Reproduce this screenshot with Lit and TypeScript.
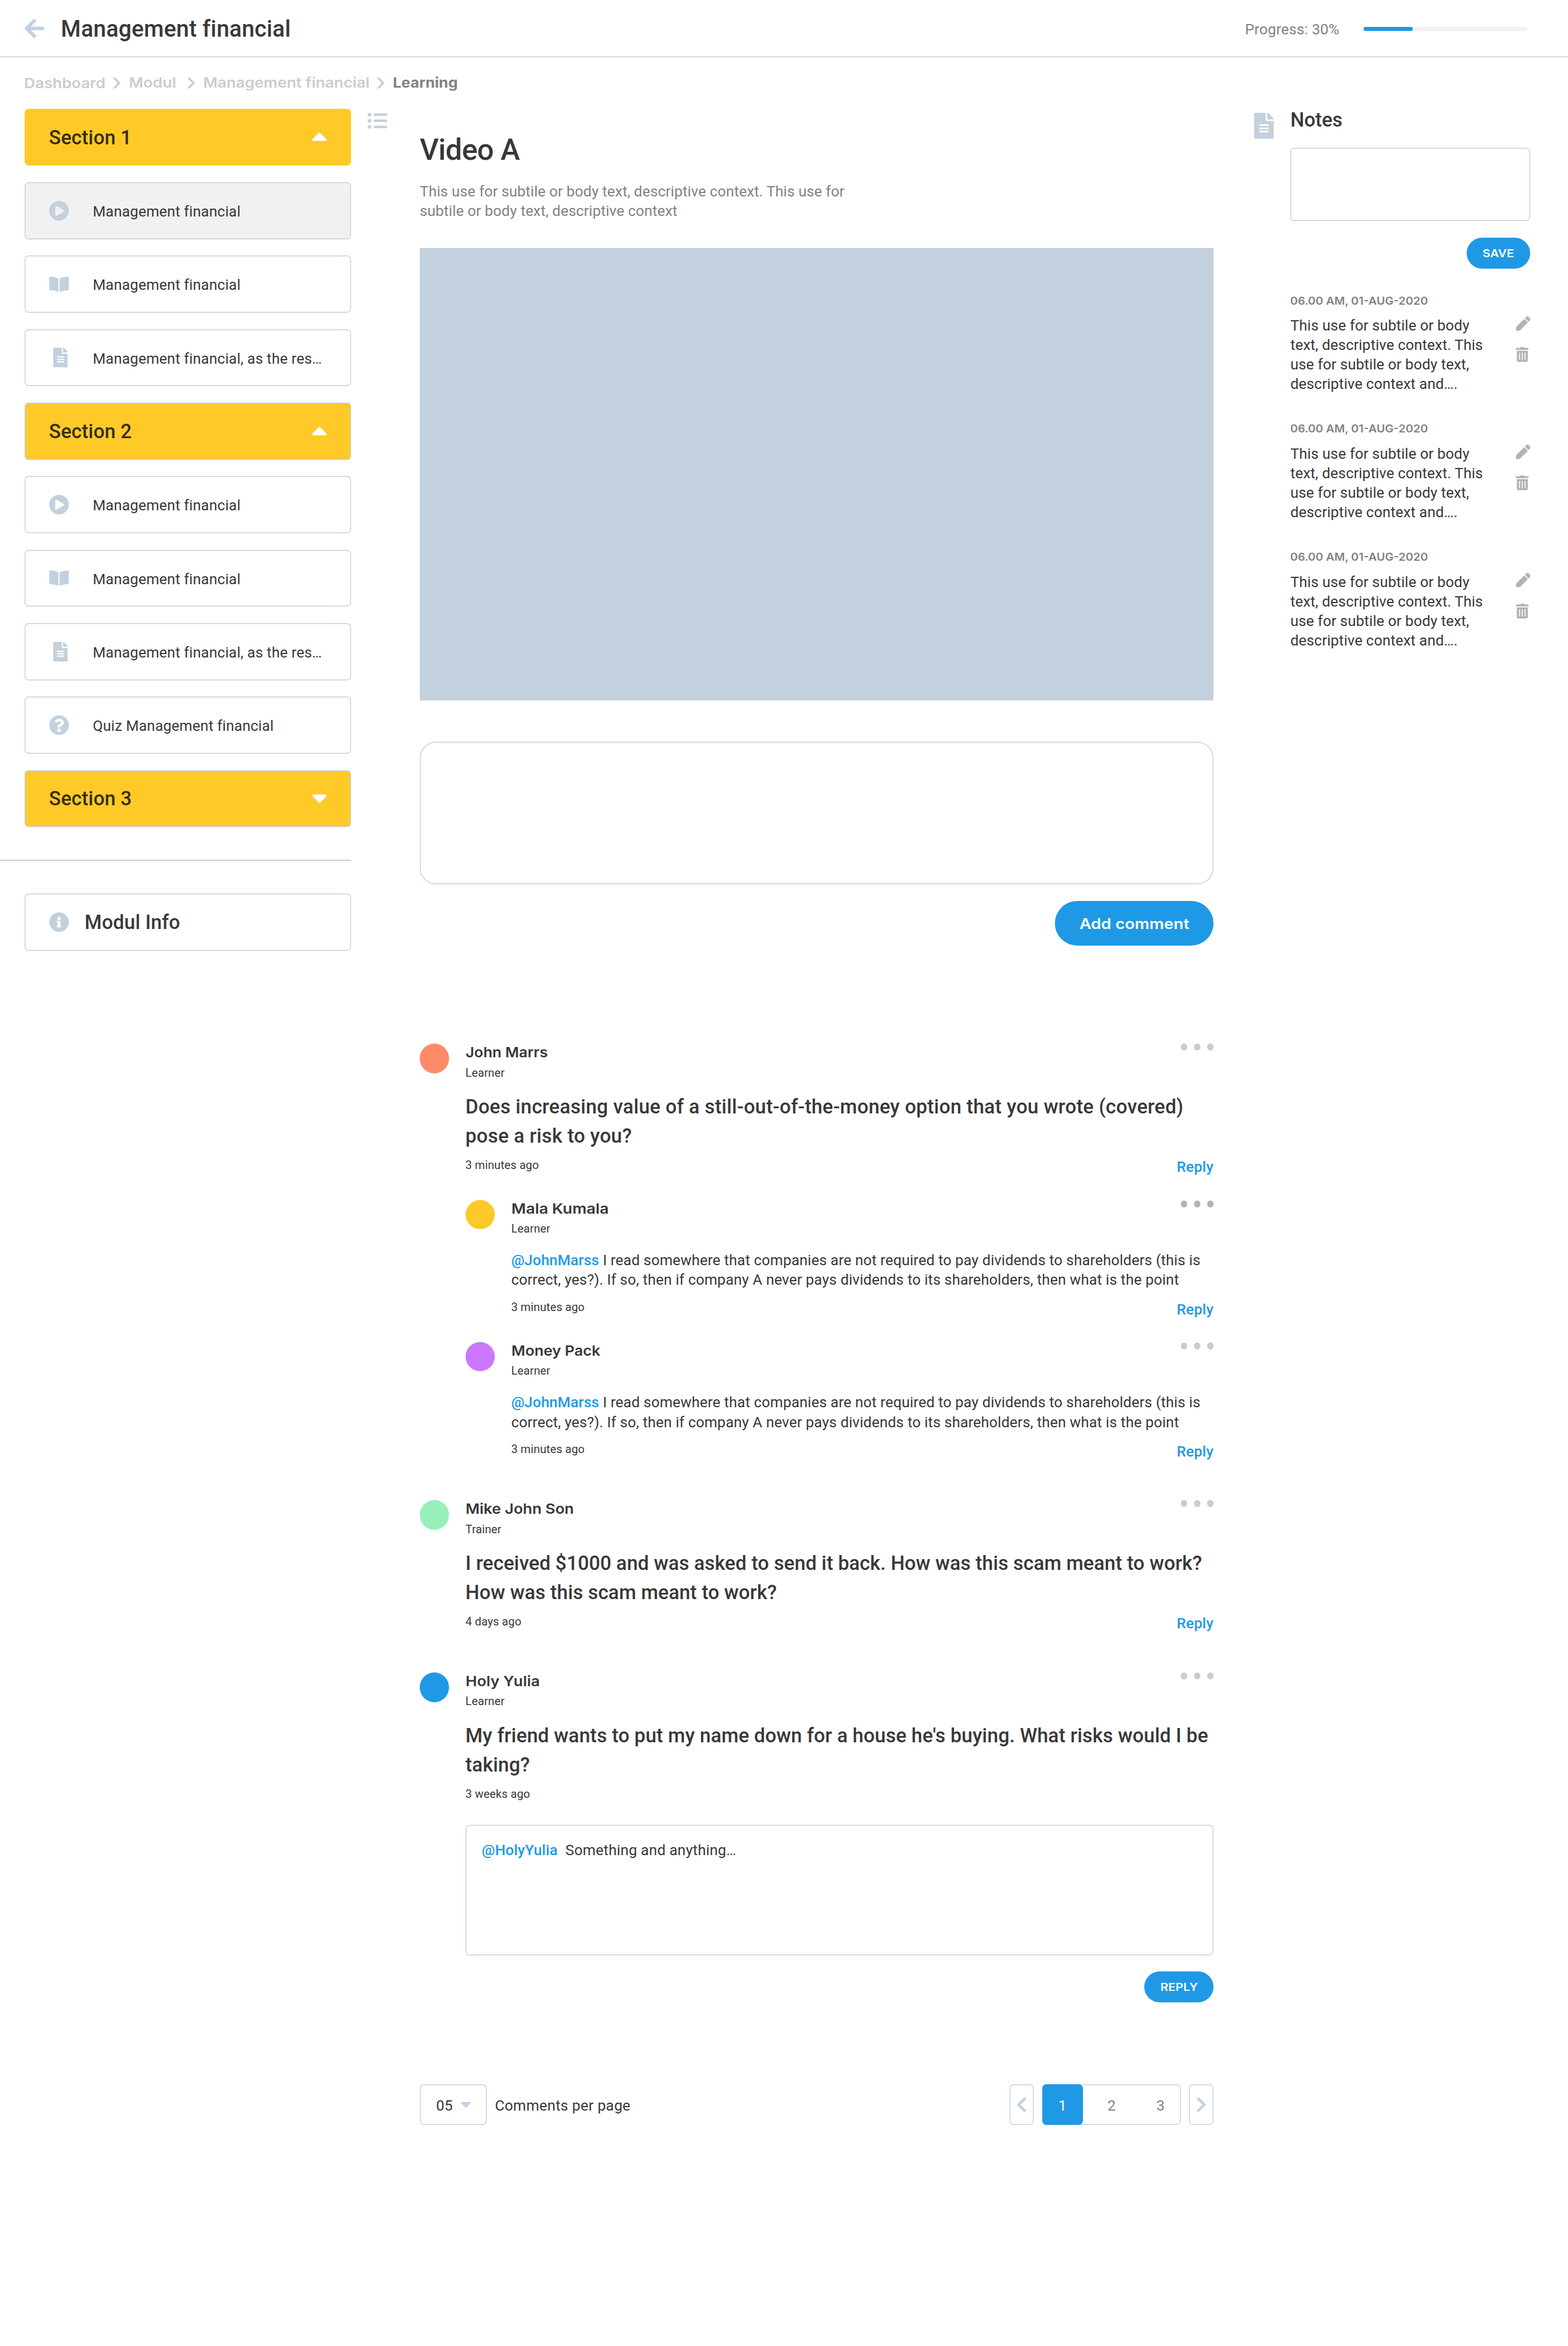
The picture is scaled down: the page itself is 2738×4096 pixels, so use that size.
import { LitElement, html, css, svg, nothing } from "lit";
import { customElement, property } from "lit/decorators.js";

const INK = css`#383838`;
const LINE = css`#c3d0de`;
const BLUE = css`#1f99e6`;

interface Glyph {
  box: string;
  w: number;
  h: number;
  d: string;
}

const GLYPHS: Record<string, Glyph> = {
  back: {
    box: "0 37.6 448 436.8", w: 24, h: 23.4,
    d: "M257.5 445.1l-22.2 22.2c-9.4 9.4-24.6 9.4-33.9 0L7 273c-9.4-9.4-9.4-24.6 0-33.9L201.4 44.7c9.4-9.4 24.6-9.4 33.9 0l22.2 22.2c9.5 9.5 9.3 25-.4 34.3L136.6 216H424c13.3 0 24 10.7 24 24v32c0 13.3-10.7 24-24 24H136.6l120.5 114.8c9.8 9.3 10 24.8.4 34.3z",
  },
  right: {
    box: "27.5 41 265 430", w: 8.7, h: 14,
    d: "M285.476 272.971L91.132 467.314c-9.373 9.373-24.569 9.373-33.941 0l-22.667-22.667c-9.357-9.357-9.375-24.522-.04-33.901L188.505 256 34.484 101.255c-9.335-9.379-9.317-24.544.04-33.901l22.667-22.667c9.373-9.373 24.569-9.373 33.941 0L285.475 239.03c9.373 9.372 9.373 24.568.001 33.941z",
  },
  left: {
    box: "27.5 41 265 430", w: 11, h: 18,
    d: "M34.52 239.03L228.87 44.69c9.37-9.37 24.57-9.37 33.94 0l22.67 22.67c9.36 9.36 9.37 24.52.04 33.9L131.49 256l154.02 154.75c9.34 9.38 9.32 24.54-.04 33.9l-22.67 22.67c-9.37 9.37-24.57 9.37-33.94 0L34.52 272.97c-9.37-9.37-9.37-24.57 0-33.94z",
  },
  up: {
    box: "11.3 191.4 297.4 160.6", w: 18, h: 10,
    d: "M288.662 352H31.338c-17.818 0-26.741-21.543-14.142-34.142l128.662-128.662c7.81-7.81 20.474-7.81 28.284 0l128.662 128.662c12.6 12.599 3.676 34.142-14.142 34.142z",
  },
  down: {
    box: "11.3 192 297.4 168.6", w: 18, h: 10.4,
    d: "M31.3 192h257.3c17.8 0 26.7 21.5 14.1 34.1L174.1 354.7c-7.8 7.8-20.5 7.8-28.3 0L17.2 226.1C4.6 213.5 13.5 192 31.3 192z",
  },
  list: {
    box: "0 48 512 416", w: 24, h: 19.5,
    d: "M48 48a48 48 0 1 0 48 48 48 48 0 0 0-48-48zm0 160a48 48 0 1 0 48 48 48 48 0 0 0-48-48zm0 160a48 48 0 1 0 48 48 48 48 0 0 0-48-48zm448 16H176a16 16 0 0 0-16 16v32a16 16 0 0 0 16 16h320a16 16 0 0 0 16-16v-32a16 16 0 0 0-16-16zm0-320H176a16 16 0 0 0-16 16v32a16 16 0 0 0 16 16h320a16 16 0 0 0 16-16V80a16 16 0 0 0-16-16zm0 160H176a16 16 0 0 0-16 16v32a16 16 0 0 0 16 16h320a16 16 0 0 0 16-16v-32a16 16 0 0 0-16-16z",
  },
  play: {
    box: "8 8 496 496", w: 24, h: 24,
    d: "M256 8C119 8 8 119 8 256s111 248 248 248 248-111 248-248S393 8 256 8zm115.7 272l-176 101c-15.8 8.8-35.7-2.5-35.7-21V152c0-18.4 19.8-29.8 35.7-21l176 107c16.4 9.2 16.4 32.9 0 42z",
  },
  book: {
    box: "0 32 576 448", w: 24, h: 18.67,
    d: "M542.22 32.05c-54.8 3.11-163.72 14.43-230.96 55.59-4.64 2.84-7.27 7.89-7.27 13.17v363.87c0 11.55 12.63 18.85 23.28 13.49 69.18-34.82 169.23-44.32 218.7-46.92 16.89-.89 30.02-14.43 30.02-30.66V62.75c.01-17.71-15.35-31.74-33.77-30.7zM264.73 87.64C197.5 46.48 88.58 35.17 33.78 32.05 15.36 31.01 0 45.04 0 62.75V400.6c0 16.24 13.13 29.78 30.02 30.66 49.49 2.6 149.59 12.11 218.77 46.95 10.62 5.35 23.21-1.94 23.21-13.46V100.63c0-5.29-2.62-10.14-7.27-12.99z",
  },
  doc: {
    box: "0 0 384 512", w: 18, h: 24,
    d: "M224 136V0H24C10.7 0 0 10.7 0 24v464c0 13.3 10.7 24 24 24h336c13.3 0 24-10.7 24-24V160H248c-13.2 0-24-10.8-24-24zm64 236c0 6.6-5.4 12-12 12H108c-6.6 0-12-5.4-12-12v-8c0-6.6 5.4-12 12-12h168c6.6 0 12 5.4 12 12v8zm0-64c0 6.6-5.4 12-12 12H108c-6.6 0-12-5.4-12-12v-8c0-6.6 5.4-12 12-12h168c6.6 0 12 5.4 12 12v8zm0-72v8c0 6.6-5.4 12-12 12H108c-6.6 0-12-5.4-12-12v-8c0-6.6 5.4-12 12-12h168c6.6 0 12 5.4 12 12zm96-114.1v6.1H256V0h6.1c6.4 0 12.5 2.5 17 7l97.9 98c4.5 4.5 7 10.6 7 16.9z",
  },
  quiz: {
    box: "8 8 496 496", w: 24, h: 24,
    d: "M504 256c0 136.997-111.043 248-248 248S8 392.997 8 256C8 119.083 119.043 8 256 8s248 111.083 248 248zM262.655 90c-54.497 0-89.255 22.957-116.549 63.758-3.536 5.286-2.353 12.415 2.715 16.258l34.699 26.31c5.205 3.947 12.621 3.008 16.665-2.122 17.864-22.658 30.113-35.797 57.303-35.797 20.429 0 45.698 13.148 45.698 32.958 0 14.976-12.363 22.667-32.534 33.976C247.128 238.528 216 254.941 216 296v4c0 6.627 5.373 12 12 12h56c6.627 0 12-5.373 12-12v-1.333c0-28.462 83.186-29.647 83.186-106.667 0-58.002-60.165-102-116.531-102zM256 338c-25.365 0-46 20.635-46 46 0 25.364 20.635 46 46 46s46-20.636 46-46c0-25.365-20.635-46-46-46z",
  },
  info: {
    box: "8 8 496 496", w: 24, h: 24,
    d: "M256 8C119.043 8 8 119.083 8 256c0 136.997 111.043 248 248 248s248-111.003 248-248C504 119.083 392.957 8 256 8zm0 110c23.196 0 42 18.804 42 42s-18.804 42-42 42-42-18.804-42-42 18.804-42 42-42zm56 254c0 6.627-5.373 12-12 12h-88c-6.627 0-12-5.373-12-12v-24c0-6.627 5.373-12 12-12h12v-64h-12c-6.627 0-12-5.373-12-12v-24c0-6.627 5.373-12 12-12h64c6.627 0 12 5.373 12 12v100h12c6.627 0 12 5.373 12 12v24z",
  },
  pen: {
    box: "0 0 512 512", w: 18, h: 18,
    d: "M290.74 93.24l128.02 128.02-277.99 277.99-114.14 12.6C11.35 513.54-1.56 500.62.14 485.34l12.7-114.22 277.9-277.88zm207.2-19.06l-60.11-60.11c-18.75-18.75-49.16-18.75-67.91 0l-56.55 56.55 128.02 128.02 56.55-56.55c18.75-18.76 18.75-49.16 0-67.91z",
  },
  trash: {
    box: "0 0 448 512", w: 15.75, h: 18,
    d: "M32 464a48 48 0 0 0 48 48h288a48 48 0 0 0 48-48V128H32zm272-256a16 16 0 0 1 32 0v224a16 16 0 0 1-32 0zm-96 0a16 16 0 0 1 32 0v224a16 16 0 0 1-32 0zm-96 0a16 16 0 0 1 32 0v224a16 16 0 0 1-32 0zM432 32H312l-9.4-18.7A24 24 0 0 0 281.1 0H166.8a23.72 23.72 0 0 0-21.4 13.3L136 32H16A16 16 0 0 0 0 48v32a16 16 0 0 0 16 16h416a16 16 0 0 0 16-16V48a16 16 0 0 0-16-16z",
  },
};

const icon = (name: string, w?: number) => {
  const g = GLYPHS[name];
  const width = w ?? g.w;
  const height = (width / g.w) * g.h;
  return html`<svg class="icon" width=${width} height=${height} viewBox=${g.box} aria-hidden="true">
    ${svg`<path d=${g.d} fill="currentColor"></path>`}
  </svg>`;
};

/** Display text set in an extended width. */
const wide = (text: string, stretch: number) =>
  html`<span class="wide" style="transform:scaleX(${stretch})">${text}</span>`;

const base = css`
  :host { display: block; }
  * { box-sizing: border-box; }
  .icon { display: block; flex: none; }
  .wide { display: inline-block; transform-origin: left center; white-space: nowrap; }
  .btn {
    display: flex; align-items: center; justify-content: center;
    background: ${BLUE}; color: #fff;
    font-family: Inter, "Noto Sans", sans-serif; font-weight: 600; white-space: nowrap;
  }
  .btn .wide { transform-origin: center; }
  .btn.small { height: 38px; border-radius: 19px; font-size: 13.5px; }
  .outline { background: #fff; box-shadow: inset 0 0 0 1px ${LINE}; border-radius: 5px; }
  .mention { color: ${BLUE}; font-weight: 500; }
`;

interface Entry { kind: "section" | "item"; label: string; icon: string; active?: boolean; plain?: boolean; }

const ENTRIES: Entry[] = [
  { kind: "section", label: "Section 1", icon: "up", plain: true },
  { kind: "item", label: "Management financial", icon: "play", active: true },
  { kind: "item", label: "Management financial", icon: "book" },
  { kind: "item", label: "Management financial, as the res…", icon: "doc" },
  { kind: "section", label: "Section 2", icon: "up" },
  { kind: "item", label: "Management financial", icon: "play" },
  { kind: "item", label: "Management financial", icon: "book" },
  { kind: "item", label: "Management financial, as the res…", icon: "doc" },
  { kind: "item", label: "Quiz Management financial", icon: "quiz" },
  { kind: "section", label: "Section 3", icon: "down" },
];

@customElement("course-sidebar")
class CourseSidebar extends LitElement {
  static styles = [base, css`
    .entries { display: flex; flex-direction: column; gap: 20px; padding-left: 30px; }
    .row { display: flex; align-items: center; height: 70px; padding: 0 30px; }
    .section { justify-content: space-between; background: #ffca28; border-radius: 5px; font-weight: 500; font-size: 24px; letter-spacing: .09px; color: #382d0f; box-shadow: inset 0 0 0 1px ${LINE}; }
    .section.plain { box-shadow: none; }
    .section .icon { color: #fff; }
    .item { padding-right: 0; font-size: 18px; letter-spacing: .115px; }
    .active { background: #f1f1f1; }
    .slot { width: 24px; margin-right: 29.6px; color: ${LINE}; display: flex; }
    .slot.doc { padding-left: 5px; }
    .label { padding-top: 1.6px; white-space: nowrap; }
    .rule { height: 1px; margin: 40px 0; background: ${LINE}; }
    .module { margin-left: 30px; font-size: 24px; font-weight: 500; letter-spacing: .12px; }
    .module .slot { margin-right: 19.7px; }
  `];
  render() {
    return html`
      <div class="entries">
        ${ENTRIES.map((e) => e.kind === "section"
          ? html`<div class="row section ${e.plain ? "plain" : ""}"><span>${e.label}</span>${icon(e.icon)}</div>`
          : html`<div class="row item outline ${e.active ? "active" : ""}">
              <span class="slot ${e.icon}">${icon(e.icon)}</span><span class="label">${e.label}</span>
            </div>`)}
      </div>
      <div class="rule"></div>
      <div class="row module outline"><span class="slot">${icon("info")}</span><span>Modul Info</span></div>
    `;
  }
}

@customElement("comment-item")
class CommentItem extends LitElement {
  @property() name = "";
  @property({ type: Number }) stretch = 1;
  @property({ type: Number }) tracking = 0.08;
  @property() standing = "";
  @property() color = "";
  @property() mention = "";
  @property() text = "";
  @property() time = "";
  @property({ type: Boolean }) nested = false;
  @property({ type: Boolean }) dark = false;
  @property({ type: Boolean }) replying = false;
  static styles = [base, css`
    .comment { display: grid; grid-template-columns: 36px 1fr; column-gap: 20px; }
    .avatar { width: 36px; height: 36px; border-radius: 50%; }
    .top { display: flex; justify-content: space-between; height: 45.2px; padding-top: .7px; }
    .name { font: 600 17.3px/20px Inter, "Noto Sans", sans-serif; height: 20px; white-space: nowrap; }
    .role { font-size: 14px; line-height: 20px; margin-top: 4.7px; letter-spacing: .1px; }
    .dots { display: flex; gap: 8px; color: #ccc; margin-top: -.7px; }
    .dots i { width: 8px; height: 8px; border-radius: 50%; background: currentColor; }
    .text { font-size: 24px; line-height: 36px; font-weight: 500; margin-top: 14.2px; }
    .foot { display: flex; justify-content: space-between; margin-top: 7.4px; height: 52.2px; }
    .time { font-size: 14px; line-height: 20px; letter-spacing: .1px; }
    .reply { font-size: 18px; line-height: 20px; font-weight: 500; color: ${BLUE}; margin-top: 2.2px; letter-spacing: .12px; }
    .nested .dots { margin-top: .3px; }
    .nested .dots.dark { color: #b3b3b3; }
    .nested .text { font-size: 18px; line-height: 24px; font-weight: 400; margin-top: 16.9px; }
    .nested .foot { margin-top: 11.4px; height: 52.5px; }
    .nested .reply { margin-top: 2.6px; }
    .replying .foot { height: 47.2px; }
  `];
  render() {
    return html`<div class="comment ${this.nested ? "nested" : ""} ${this.replying ? "replying" : ""}">
      <span class="avatar" style="background:${this.color}"></span>
      <div>
        <div class="top">
          <div><div class="name">${wide(this.name, this.stretch)}</div><div class="role">${this.standing}</div></div>
          <div class="dots ${this.dark ? "dark" : ""}"><i></i><i></i><i></i></div>
        </div>
        <div class="text" style="letter-spacing:${this.tracking}px">${this.mention ? html`<span class="mention">${this.mention}</span> ` : nothing}${this.text}</div>
        <div class="foot"><span class="time">${this.time}</span>${this.replying ? nothing : html`<span class="reply">Reply</span>`}</div>
      </div>
    </div>`;
  }
}

@customElement("note-item")
class NoteItem extends LitElement {
  static styles = [base, css`
    .note { display: grid; grid-template-columns: 250px 1fr; height: 157px; align-content: start; }
    .date { font: 600 13.4px/16px Inter, "Noto Sans", sans-serif; color: #828282; height: 26.1px; white-space: nowrap; }
    .text { font-size: 18px; line-height: 24px; letter-spacing: .09px; }
    .tools { display: flex; flex-direction: column; gap: 20px; padding: 27px 0 0 26px; color: #b3b3b3; }
  `];
  render() {
    return html`<div class="note">
      <div><div class="date">${wide("06.00 AM, 01-AUG-2020", 1.045)}</div>
      <div class="text">This use for subtile or body text, descriptive context. This use for subtile or body text, descriptive context and….</div></div>
      <div class="tools">${icon("pen")}${icon("trash")}</div>
    </div>`;
  }
}

const DIVIDENDS = "I read somewhere that companies are not required to pay dividends to shareholders (this is correct, yes?). If so, then if company A never pays dividends to its shareholders, then what is the point";

@customElement("app-root")
class AppRoot extends LitElement {
  static styles = [base, css`
    .page { zoom: 1.42604; width: 1920px; height: 2872px; overflow: hidden; background: #fff; color: ${INK}; font-family: Roboto, "Noto Sans", sans-serif; }
    .header { display: flex; align-items: center; height: 70px; padding: 0 50px 0 30px; box-shadow: inset 0 -1px 0 ${LINE}; }
    .header .icon { color: ${LINE}; }
    .title { font-size: 28px; font-weight: 500; margin-left: 20.6px; flex: 1; letter-spacing: .1px; padding-top: 1px; }
    .progress { font-size: 18px; color: #828282; width: 145.5px; padding-top: 2px; letter-spacing: .13px; }
    .bar { width: 200px; height: 5px; border-radius: 2.5px; background: #f1f1f1; margin-top: 1px; }
    .fill { height: 5px; border-radius: 2.5px; background: ${BLUE}; }
    .crumbs { display: grid; grid-template-columns: 109.2px 18.8px 72.5px 19px 213px 19px auto; align-items: center; height: 24px; margin: 18px 0 21px 29.5px; font: 600 17.3px/24px Inter, "Noto Sans", sans-serif; color: #ccc; white-space: nowrap; }
    .crumbs > .icon { margin-top: 1px; }
    .low { margin-top: 2px; }
    .crumbs .here { color: #828282; font-weight: 700; }
    .body { display: grid; grid-template-columns: 430px 84px 972px 94px 294px; }
    .rail { padding: 5px 0 0 20px; color: ${LINE}; }
    .rail.right { padding-left: 50px; }
    .heading { font-size: 36px; line-height: 48px; font-weight: 500; margin-top: 27px; letter-spacing: -.4px; }
    .desc { font-size: 18px; line-height: 24px; color: #828282; width: 540px; margin-top: 14px; letter-spacing: .08px; }
    .video { height: 554px; margin-top: 34px; background: ${LINE}; }
    .composer { height: 175px; margin-top: 50px; border-radius: 20px; }
    .add { width: 194px; height: 55px; border-radius: 27.5px; font-size: 17.8px; margin: 20px 0 120px auto; }
    .replies { padding: 0 0 20px 56px; }
    .gap { height: 20px; }
    .replybox { height: 160px; margin-left: 56px; padding: 19.2px 20px; font-size: 18px; line-height: 24px; letter-spacing: .15px; }
    .replybox .mention { margin-right: 5px; letter-spacing: .07px; }
    .send { width: 85px; margin: 20px 0 0 auto; }
    .pager { display: flex; align-items: center; height: 50px; margin-top: 100px; font-size: 18px; }
    .size { width: 82px; height: 50px; display: flex; align-items: center; padding-left: 20px; gap: 10px; margin-right: 10px; }
    .size span, .caption { padding-top: 1.6px; }
    .caption { letter-spacing: .22px; }
    .size .icon, .step { color: ${LINE}; }
    .spacer { flex: 1; }
    .step { width: 30px; height: 50px; display: flex; align-items: center; justify-content: center; }
    .pages { display: flex; width: 170px; height: 50px; margin: 0 10px; color: #828282; line-height: 52px; text-align: center; }
    .current { width: 50px; background: ${BLUE}; color: #fff; border-radius: 5px; }
    .num { width: 60px; }
    .current + .num { margin-left: 5px; }
    .num + .num { margin-right: -5px; }
    .notes { font-size: 24px; line-height: 28px; font-weight: 500; }
    .notebox { height: 90px; margin-top: 20px; }
    .save { width: 78px; margin: 20px 0 31.2px auto; }
  `];
  render() {
    return html`<div class="page">
      <div class="header">
        ${icon("back")}
        <div class="title">Management financial</div>
        <div class="progress">Progress: 30%</div>
        <div class="bar"><div class="fill" style="width:30%"></div></div>
      </div>
      <div class="crumbs">
        <span class="low">${wide("Dashboard", 1.092)}</span>${icon("right")}<span>${wide("Modul", 1.105)}</span><span class="low">${icon("right")}</span>
        <span>${wide("Management financial", 1.096)}</span><span class="low">${icon("right")}</span><span class="here">${wide("Learning", 1.065)}</span>
      </div>
      <div class="body">
        <course-sidebar></course-sidebar>
        <div class="rail">${icon("list")}</div>
        <div>
          <div class="heading">Video A</div>
          <div class="desc">This use for subtile or body text, descriptive context. This use for subtile or body text, descriptive context</div>
          <div class="video"></div>
          <div class="composer outline"></div>
          <div class="btn add">${wide("Add comment", 1.118)}</div>
          <comment-item name="John Marrs" stretch="1.055" tracking="0.19" standing="Learner" color="#fc8a66" text="Does increasing value of a still-out-of-the-money option that you wrote (covered) pose a risk to you?" time="3 minutes ago"></comment-item>
          <div class="replies">
            <comment-item nested dark name="Mala Kumala" stretch="1.116" tracking="0.095" standing="Learner" color="#ffca28" mention="@JohnMarss" text=${DIVIDENDS} time="3 minutes ago"></comment-item>
            <comment-item nested name="Money Pack" stretch="1.064" tracking="0.095" standing="Learner" color="#cb77ff" mention="@JohnMarss" text=${DIVIDENDS} time="3 minutes ago"></comment-item>
          </div>
          <comment-item name="Mike John Son" stretch="1.079" tracking="0.06" standing="Trainer" color="#97f0ba" text="I received $1000 and was asked to send it back. How was this scam meant to work? How was this scam meant to work?" time="4 days ago"></comment-item>
          <div class="gap"></div>
          <comment-item replying name="Holy Yulia" stretch="1.083" tracking="0.09" standing="Learner" color="#1f99e6" text="My friend wants to put my name down for a house he's buying. What risks would I be taking?" time="3 weeks ago"></comment-item>
          <div class="replybox outline"><span class="mention">@HolyYulia</span> Something and anything…</div>
          <div class="btn small send">${wide("REPLY", 1.09)}</div>
          <div class="pager">
            <div class="size outline"><span>05</span>${icon("down", 12)}</div>
            <span class="caption">Comments per page</span>
            <div class="spacer"></div>
            <div class="step outline">${icon("left")}</div>
            <div class="pages outline"><span class="current">1</span><span class="num">2</span><span class="num">3</span></div>
            <div class="step outline">${icon("right", 11)}</div>
          </div>
        </div>
        <div class="rail right">${icon("doc", 24)}</div>
        <div>
          <div class="notes">Notes</div>
          <div class="notebox outline"></div>
          <div class="btn small save">${wide("SAVE", 1.085)}</div>
          <note-item></note-item><note-item></note-item><note-item></note-item>
        </div>
      </div>
    </div>`;
  }
}
